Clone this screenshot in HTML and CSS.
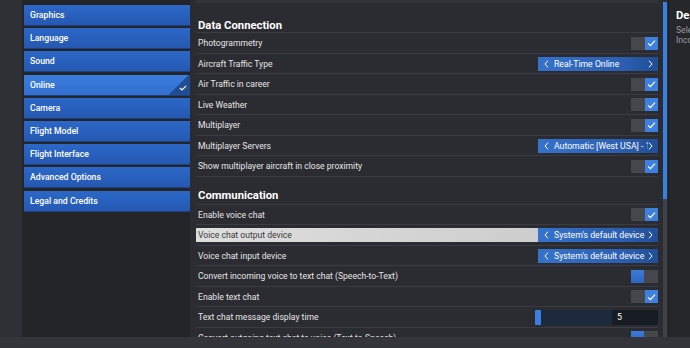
FILE: index.html
```html
<!DOCTYPE html>
<html>
<head>
<meta charset="utf-8">
<link rel="stylesheet" href="styles.css">
</head>
<body>
<div class="app">
  <div class="gutter"></div>
  <nav class="menu">
    <div class="item">Graphics</div>
    <div class="item">Language</div>
    <div class="item">Sound</div>
    <div class="item active">Online
      <span class="corner"><svg width="8" height="6" viewBox="0 0 8 6"><polyline points="0.8,3 3,5 7.2,0.8" fill="none" stroke="#fff" stroke-width="1.1"/></svg></span>
    </div>
    <div class="item">Camera</div>
    <div class="item">Flight Model</div>
    <div class="item">Flight Interface</div>
    <div class="item">Advanced Options</div>
    <div class="item">Legal and Credits</div>
  </nav>
  <main class="content">
    <h2 class="heading first">Data Connection</h2>
    <div class="row"><div class="inner"><span>Photogrammetry</span><span class="check on"><i></i><b><svg width="13" height="12" viewBox="0 0 13 12"><polyline points="3,6.3 5.4,8.7 10,3.6" fill="none" stroke="#fff" stroke-width="1.2"/></svg></b></span></div></div>
    <div class="row"><div class="inner"><span>Aircraft Traffic Type</span><span class="select"><svg class="chev" width="5" height="8" viewBox="0 0 5 8"><polyline points="4,0.7 1,4 4,7.3" fill="none" stroke="#fff" stroke-width="1"/></svg><span class="val">Real-Time Online</span><svg class="chev" width="5" height="8" viewBox="0 0 5 8"><polyline points="1,0.7 4,4 1,7.3" fill="none" stroke="#fff" stroke-width="1"/></svg></span></div></div>
    <div class="row"><div class="inner"><span>Air Traffic in career</span><span class="check on"><i></i><b><svg width="13" height="12" viewBox="0 0 13 12"><polyline points="3,6.3 5.4,8.7 10,3.6" fill="none" stroke="#fff" stroke-width="1.2"/></svg></b></span></div></div>
    <div class="row"><div class="inner"><span>Live Weather</span><span class="check on"><i></i><b><svg width="13" height="12" viewBox="0 0 13 12"><polyline points="3,6.3 5.4,8.7 10,3.6" fill="none" stroke="#fff" stroke-width="1.2"/></svg></b></span></div></div>
    <div class="row"><div class="inner"><span>Multiplayer</span><span class="check on"><i></i><b><svg width="13" height="12" viewBox="0 0 13 12"><polyline points="3,6.3 5.4,8.7 10,3.6" fill="none" stroke="#fff" stroke-width="1.2"/></svg></b></span></div></div>
    <div class="row"><div class="inner"><span>Multiplayer Servers</span><span class="select"><svg class="chev" width="5" height="8" viewBox="0 0 5 8"><polyline points="4,0.7 1,4 4,7.3" fill="none" stroke="#fff" stroke-width="1"/></svg><span class="val">Automatic [West USA] - 10ms</span><svg class="chev" width="5" height="8" viewBox="0 0 5 8"><polyline points="1,0.7 4,4 1,7.3" fill="none" stroke="#fff" stroke-width="1"/></svg></span></div></div>
    <div class="row"><div class="inner"><span>Show multiplayer aircraft in close proximity</span><span class="check on"><i></i><b><svg width="13" height="12" viewBox="0 0 13 12"><polyline points="3,6.3 5.4,8.7 10,3.6" fill="none" stroke="#fff" stroke-width="1.2"/></svg></b></span></div></div>

    <h2 class="heading">Communication</h2>
    <div class="row"><div class="inner"><span>Enable voice chat</span><span class="check on"><i></i><b><svg width="13" height="12" viewBox="0 0 13 12"><polyline points="3,6.3 5.4,8.7 10,3.6" fill="none" stroke="#fff" stroke-width="1.2"/></svg></b></span></div></div>
    <div class="row"><div class="inner hl"><span>Voice chat output device</span><span class="select"><svg class="chev" width="5" height="8" viewBox="0 0 5 8"><polyline points="4,0.7 1,4 4,7.3" fill="none" stroke="#fff" stroke-width="1"/></svg><span class="val">System's default device</span><svg class="chev" width="5" height="8" viewBox="0 0 5 8"><polyline points="1,0.7 4,4 1,7.3" fill="none" stroke="#fff" stroke-width="1"/></svg></span></div></div>
    <div class="row"><div class="inner"><span>Voice chat input device</span><span class="select"><svg class="chev" width="5" height="8" viewBox="0 0 5 8"><polyline points="4,0.7 1,4 4,7.3" fill="none" stroke="#fff" stroke-width="1"/></svg><span class="val">System's default device</span><svg class="chev" width="5" height="8" viewBox="0 0 5 8"><polyline points="1,0.7 4,4 1,7.3" fill="none" stroke="#fff" stroke-width="1"/></svg></span></div></div>
    <div class="row"><div class="inner"><span>Convert incoming voice to text chat (Speech-to-Text)</span><span class="check off"><b></b><i></i></span></div></div>
    <div class="row"><div class="inner"><span>Enable text chat</span><span class="check on"><i></i><b><svg width="13" height="12" viewBox="0 0 13 12"><polyline points="3,6.3 5.4,8.7 10,3.6" fill="none" stroke="#fff" stroke-width="1.2"/></svg></b></span></div></div>
    <div class="row"><div class="inner"><span>Text chat message display time</span><span class="slider"><span class="thumb"></span><span class="fill"></span><span class="num">5</span></span></div></div>
    <div class="row"><div class="inner"><span>Convert outgoing text chat to voice (Text-to-Speech)</span><span class="check off"><b></b><i></i></span></div></div>
  </main>
  <div class="scroll"><div class="thumbbar"></div><div class="track"></div></div>
  <aside class="desc">
    <div class="dtitle">Description</div>
    <div class="dtext">Select the device used for voice chat output.</div>
    <div class="dtext">Incoming voice chat will play on it.</div>
  </aside>
</div>
<div class="bottom"></div>
</body>
</html>
```

FILE: styles.css
```css
* { box-sizing: border-box; }
html, body { margin: 0; padding: 0; }
body {
  width: 690px;
  height: 348px;
  overflow: hidden;
  background: #33353a;
  font-family: Roboto, "Noto Sans", sans-serif;
}
.app {
  display: flex;
  height: 337px;
}
.gutter {
  width: 22px;
  flex: none;
  background: #2e3035;
}
.menu {
  width: 168px;
  flex: none;
  background: #232529;
  padding: 5px 0 0 2px;
  display: flex;
  flex-direction: column;
  gap: 2.2px;
}
.item {
  position: relative;
  height: 21px;
  line-height: 21px;
  padding-left: 6px;
  color: #fff;
  font-size: 8.7px;
  font-weight: 500;
  background: linear-gradient(180deg, #2c68c8 0%, #2558b2 100%);
  border-bottom: 1px solid #1d3f7c;
  overflow: hidden;
}
.item.active {
  background: linear-gradient(180deg, #3a7ddc 0%, #336fcf 100%);
}
.corner {
  position: absolute;
  right: 0;
  bottom: 0;
  width: 22px;
  height: 21px;
  background: linear-gradient(135deg, transparent 50%, #1f4c92 50%);
}
.corner svg {
  position: absolute;
  right: 3px;
  bottom: 4px;
}
.content {
  width: 472px;
  flex: none;
  background: #2a2c31;
  padding: 0 4px 0 6px;
  overflow: hidden;
}
.heading {
  margin: 0;
  height: 28px;
  padding: 0 2px 2px;
  display: flex;
  align-items: flex-end;
  color: #fff;
  font-size: 11.3px;
  font-weight: 700;
  border-bottom: 1px solid #3a3c42;
}
.heading.first {
  height: 33px;
  padding-bottom: 0;
  border-top: 3px solid #313338;
}
.row {
  height: 20.5px;
  padding: 3px 0;
  border-bottom: 1px solid #3a3c42;
}
.inner {
  height: 14px;
  display: flex;
  align-items: center;
  justify-content: space-between;
  padding-left: 2px;
  color: #e6e6e6;
  font-size: 8.6px;
  white-space: nowrap;
}
.inner.hl {
  background: linear-gradient(90deg, #dedede 0%, #c8c8c8 100%);
  color: #3a3a3a;
}
.check {
  display: flex;
  height: 13px;
  width: 27px;
}
.check i {
  flex: 1;
  background: #45474d;
}
.check b {
  width: 13px;
  background: #3e7fdf;
  display: flex;
  align-items: center;
  justify-content: center;
}
.check.off b {
  width: 13px;
  background: linear-gradient(180deg, #3b7ad8, #2e66c0);
}
.select {
  width: 120px;
  height: 14px;
  display: flex;
  align-items: center;
  padding: 0 5px 0 6px;
  color: #fff;
  font-size: 8.7px;
  background: linear-gradient(90deg, #3672cb 0%, #2b5fb2 70%, #214e96 100%);
}
.select .val {
  flex: 1;
  overflow: hidden;
  white-space: nowrap;
  padding-left: 5px;
}
.chev { flex: none; }
.slider {
  width: 123px;
  height: 15px;
  display: flex;
  align-items: stretch;
  background: #171b22;
}
.slider .thumb {
  width: 6px;
  background: #3b7fe0;
  border-radius: 1px;
}
.slider .fill {
  width: 71px;
  background: #1d2a3e;
}
.slider .num {
  padding-left: 5px;
  color: #fff;
  font-size: 8.8px;
  line-height: 15px;
}
.scroll {
  width: 6px;
  flex: none;
  background: #2a2c31;
  display: flex;
  flex-direction: column;
  align-items: center;
  padding-top: 2px;
}
.thumbbar {
  width: 4px;
  height: 197px;
  background: #3a80e0;
}
.track {
  width: 4px;
  flex: 1;
  background: #404248;
}
.desc {
  flex: 1;
  background: #25272b;
  border-left: 1px solid #1e2024;
  padding: 8px 0 0 7px;
  overflow: hidden;
  white-space: nowrap;
}
.dtitle {
  color: #fff;
  font-size: 11.3px;
  font-weight: 700;
  line-height: 16px;
  margin-bottom: 2px;
}
.dtext {
  color: #9a9ca2;
  font-size: 8.6px;
  line-height: 9.5px;
}
.bottom {
  height: 11px;
  background: #33353a;
}
```
